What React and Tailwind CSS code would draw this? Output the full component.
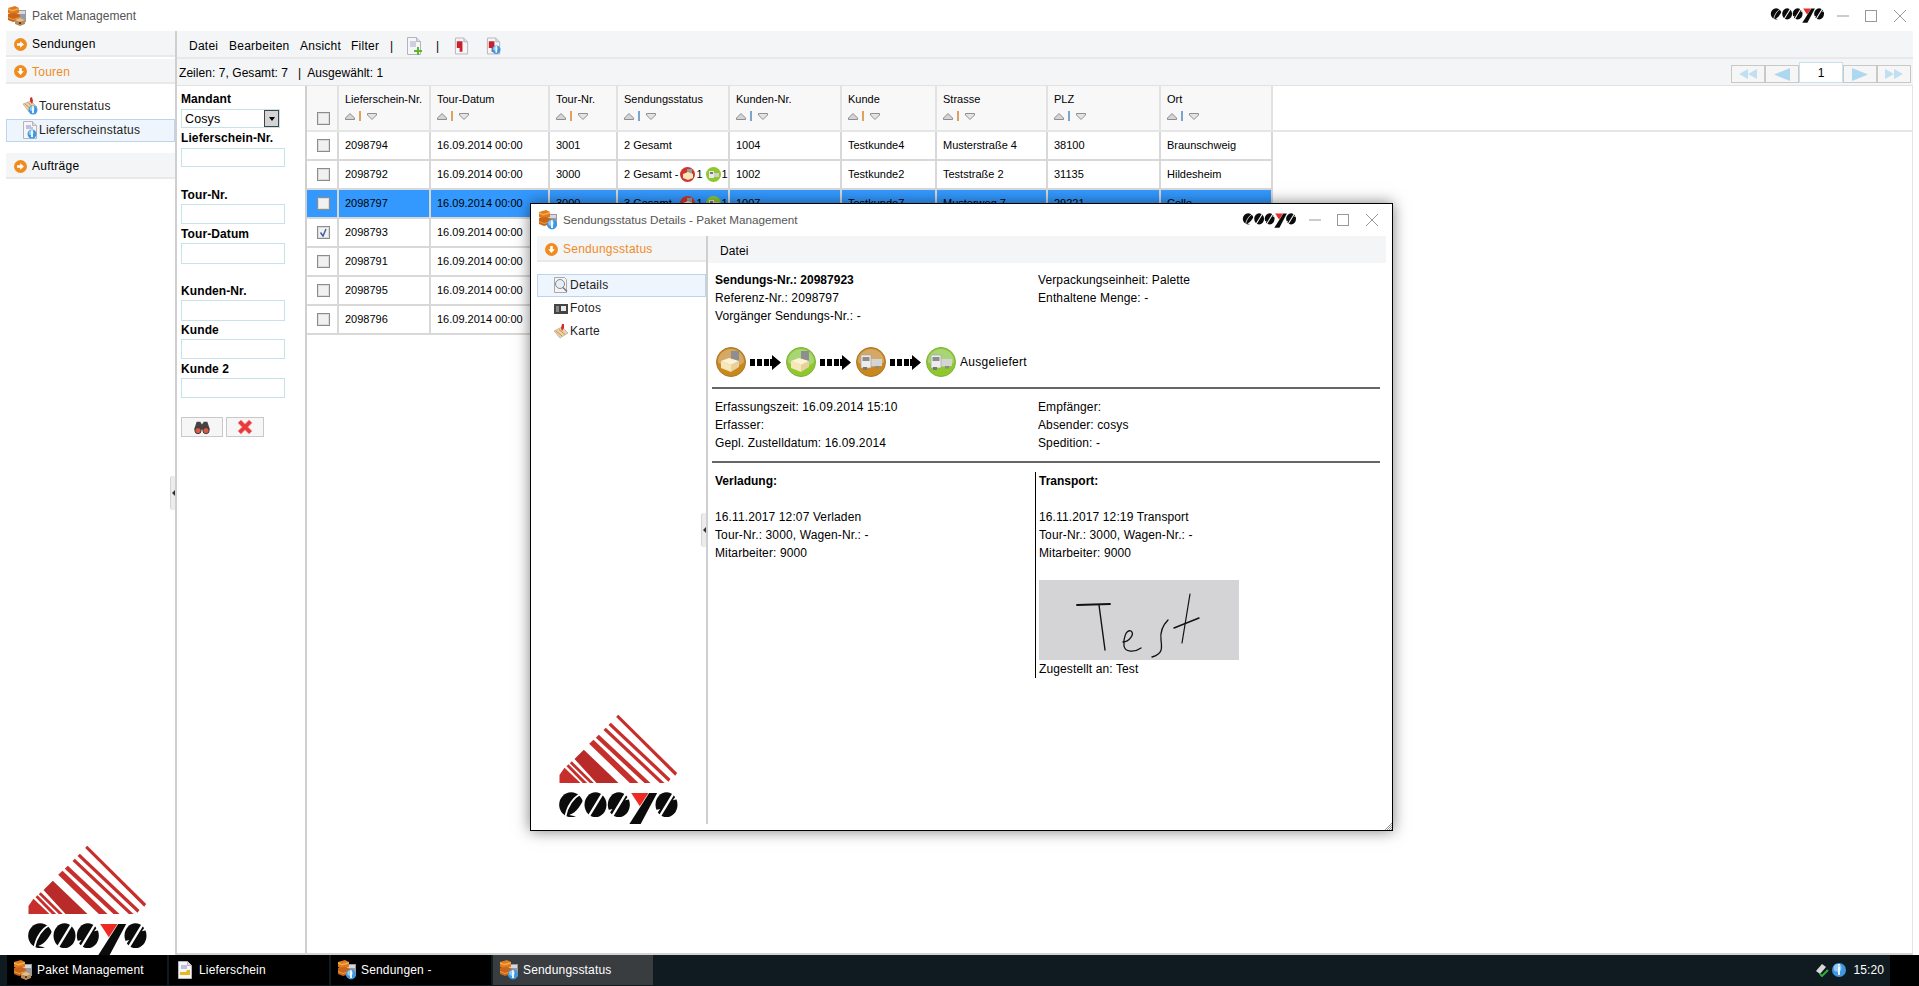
import React from "react";

const columns = [
  { label: "Lieferschein-Nr.", w: "w-[92px]", bar: "bg-[#e0a060]" },
  { label: "Tour-Datum", w: "w-[119px]", bar: "bg-[#e0a060]" },
  { label: "Tour-Nr.", w: "w-[68px]", bar: "bg-[#e0a060]" },
  { label: "Sendungsstatus", w: "w-[112px]", bar: "bg-[#7aa5cc]" },
  { label: "Kunden-Nr.", w: "w-[112px]", bar: "bg-[#7aa5cc]" },
  { label: "Kunde", w: "w-[95px]", bar: "bg-[#e0a060]" },
  { label: "Strasse", w: "w-[111px]", bar: "bg-[#e0a060]" },
  { label: "PLZ", w: "w-[113px]", bar: "bg-[#7aa5cc]" },
  { label: "Ort", w: "w-[112px]", bar: "bg-[#7aa5cc]" },
];

const rows = [
  ["2098794", "16.09.2014 00:00", "3001", "2 Gesamt", "1004", "Testkunde4", "Musterstraße 4", "38100", "Braunschweig"],
  ["2098792", "16.09.2014 00:00", "3000", "2 Gesamt -", "1002", "Testkunde2", "Teststraße 2", "31135", "Hildesheim"],
  ["2098797", "16.09.2014 00:00", "3000", "3 Gesamt -", "1007", "Testkunde7", "Musterweg 7", "29221", "Celle"],
  ["2098793", "16.09.2014 00:00", "", "", "", "", "", "", ""],
  ["2098791", "16.09.2014 00:00", "", "", "", "", "", "", ""],
  ["2098795", "16.09.2014 00:00", "", "", "", "", "", "", ""],
  ["2098796", "16.09.2014 00:00", "", "", "", "", "", "", ""],
];

function CircleArrow({ down }) {
  return (
    <svg viewBox="0 0 13 13" className="w-[13px] h-[13px] shrink-0">
      <circle cx="6.5" cy="6.5" r="6.5" fill="#f08c1e" />
      {down ? (
        <path d="M5.2 3h2.6v3.2h2L6.5 10 3.2 6.2h2z" fill="#fff" />
      ) : (
        <path d="M3 5.2h3.2v-2L10 6.5 6.2 9.8v-2H3z" fill="#fff" />
      )}
    </svg>
  );
}

function InfoDot({ x, y, r }) {
  return (
    <g>
      <circle cx={x} cy={y} r={r} fill="#3f97e0" />
      <circle cx={x - r * 0.2} cy={y - r * 0.3} r={r * 0.55} fill="#8fcaf5" />
      <rect x={x - 0.9} y={y - r * 0.5} width="1.8" height={r * 1.2} fill="#fff" />
      <rect x={x - 0.9} y={y - r * 0.85} width="1.8" height="1.5" fill="#fff" />
    </g>
  );
}

// the orange parcel stack used for all the app windows
function AppIcon({ info, className }) {
  return (
    <svg viewBox="0 0 20 20" className={className}>
      <rect x="9" y="4" width="10" height="12" fill="#9a9aa0" />
      <rect x="10" y="5" width="8" height="3" fill="#d8d8dc" />
      <path d="M1 2l7-2 4 2v5l-7 2-4-2z" fill="#e07a20" />
      <path d="M1 2l4 2 7-2v1.5l-7 2-4-2z" fill="#f4b04a" />
      <path d="M1 8l7-1 5 2v5l-7 2-5-2z" fill="#c9651a" />
      <path d="M1 11l5 2 7-2v1l-7 2-5-2z" fill="#eea040" />
      {info ? (
        <InfoDot x={14} y={14.5} r={5} />
      ) : (
        <g>
          <path d="M8 14l5-2 5 2v4l-5 2-5-2z" fill="#b98a58" />
          <path d="M8 14l5 2 5-2-5-2z" fill="#e0c090" />
          <rect x="12" y="16" width="2" height="2" fill="#5a3a20" />
        </g>
      )}
    </svg>
  );
}

function DocIcon({ className, children }) {
  return (
    <svg viewBox="0 0 16 18" className={className}>
      <path d="M1.5.5h9l4 4v13h-13z" fill="#f6f6f8" stroke="#b4b4bc" />
      <path d="M10.5.5v4h4" fill="#dcdce4" stroke="#b4b4bc" />
      {children}
    </svg>
  );
}

function TourIcon({ className }) {
  return (
    <svg viewBox="0 0 16 18" className={className}>
      <path d="M1 7l8-3 6 6-8 5z" fill="#e8d4b0" stroke="#b09a80" strokeWidth=".6" />
      <path d="M3 7l7 6M6 5.500l6 6" stroke="#d88a3a" strokeWidth="1" />
      <path d="M8 1l2-1 1 4-1 3-2-3z" fill="#d03028" />
      <InfoDot x={11} y={13} r={4.500} />
    </svg>
  );
}

function Cosys({ className }) {
  return (
    <svg viewBox="24 248 356 100" className={className}>
      <CosysLetters />
    </svg>
  );
}

function CosysLetters() {
  return (
    <g>
      <ellipse cx="60" cy="287" rx="36" ry="37" fill="#0b0b0b" />
      <path d="M92 252C66 266 48 290 42 326" stroke="#fff" strokeWidth="5" fill="none" />
      <path d="M102 262C88 290 78 310 54 318l46 10z" fill="#fff" />
      <ellipse cx="133" cy="287" rx="33" ry="37" fill="#0b0b0b" />
      <path d="M154 254L114 320" stroke="#fff" strokeWidth="7" />
      <ellipse cx="203" cy="287" rx="33" ry="37" fill="#0b0b0b" />
      <path d="M224 254L184 320" stroke="#fff" strokeWidth="7" />
      <path d="M238 270l-16 4 10-14zM168 304l16-4-10 14z" fill="#fff" />
      <path d="M240 252h52l-26 40z" fill="#ee2a24" />
      <path d="M294 252h24l-50 94h-34z" fill="#0b0b0b" />
      <ellipse cx="346" cy="287" rx="33" ry="37" fill="#0b0b0b" />
      <path d="M367 254L327 320" stroke="#fff" strokeWidth="7" />
      <path d="M381 270l-16 4 10-14zM311 304l16-4-10 14z" fill="#fff" />
    </g>
  );
}

function BigLogo() {
  const red = "#c62f2c";
  return (
    <svg viewBox="24 18 356 327" className="w-[119px] h-[109px] block">
      <path d="M195 24l6-7 177 175-6 8z" fill={red} />
      <path d="M172 48l7-7 179 169-6 8z" fill={red} />
      <path d="M157 63l7-7 176 166h-14z" fill={red} />
      <path d="M134 86l9-9 155 145h-18z" fill={red} />
      <path d="M114 104l13-12 135 130h-26z" fill={red} />
      <path d="M70 150l28-28 104 100h-66z" fill="#b92b29" />
      <path d="M56 163l6-6 66 65h-12z" fill={red} />
      <path d="M46 172l6-6 56 56H95z" fill={red} />
      <path d="M25 198l15-22 48 46H25z" fill={red} />
      <CosysLetters />
    </svg>
  );
}

function Step({ green, truck }) {
  const base = green ? "#8ec82c" : "#c9871c";
  const top = green ? "#a9d675" : "#d6a868";
  return (
    <svg viewBox="0 0 30 30" className="w-[30px] h-[30px] shrink-0">
      <circle cx="15" cy="15" r="14.500" fill={base} stroke={green ? "#7fb040" : "#a8782c"} />
      <path d="M2 15a13 13 0 0 1 26 0c-4 4-8 5-13 5s-9-1-13-5z" fill={top} />
      {truck ? (
        <g>
          <rect x="15" y="12" width="11" height="7" fill="#d4d4d4" />
          <path d="M5 8h10v13H5z" fill="#ececec" stroke="#9a9a9a" strokeWidth=".6" />
          <rect x="6.500" y="10" width="7" height="4" fill="#8c8c8c" />
          <rect x="7" y="20" width="4" height="3" fill="#777" />
          <rect x="19" y="19" width="4" height="2.500" fill="#8a8a8a" />
        </g>
      ) : (
        <g>
          <rect x="15" y="4" width="8" height="10" fill="#8e8e92" />
          <path d="M5 14l8-3 10 3-8 4z" fill="#fdf3d4" />
          <path d="M5 14l10 4v7L5 21z" fill="#f6e6b8" />
          <path d="M15 18l8-4v6l-8 5z" fill="#e8d29a" />
        </g>
      )}
    </svg>
  );
}

function MiniStatus({ kind }) {
  return (
    <svg viewBox="0 0 15 15" className="w-[15px] h-[15px] shrink-0">
      <circle cx="7.500" cy="7.500" r="7.500" fill={kind === "red" ? "#d0342c" : "#8ec82c"} />
      {kind === "red" ? (
        <g>
          <rect x="7" y="2" width="5" height="5" fill="#9a9a9a" />
          <path d="M3 7l5-2 5 2v4l-5 2-5-2z" fill="#f6e6b8" />
        </g>
      ) : (
        <g>
          <rect x="3" y="4" width="5" height="7" fill="#e8e8e8" />
          <rect x="8" y="6" width="5" height="4" fill="#cfcfcf" />
          <rect x="4" y="5" width="3" height="2" fill="#777" />
        </g>
      )}
    </svg>
  );
}

function Check({ checked }) {
  return (
    <div className="w-[13px] h-[13px] border border-[#8c8c8c] bg-[#f1f1f1] shadow-[inset_0_0_0_1px_#dcdcdc] flex items-center justify-center">
      {checked && (
        <svg viewBox="0 0 11 11" className="w-[11px] h-[11px]">
          <path d="M2.500 5.500L5 9l3-7" stroke="#3f5aa6" strokeWidth="1.400" fill="none" />
        </svg>
      )}
    </div>
  );
}

function SortIcons({ bar }) {
  return (
    <div className="flex items-center h-[10px] mt-[5px]">
      <svg viewBox="0 0 10 7" className="w-[10px] h-[7px]">
        <path d="M5 .5L9.500 5v1.500h-9V5z" fill="#d4d4d4" stroke="#777" strokeWidth=".8" />
      </svg>
      <div className={`w-[2px] h-[10px] ml-[4px] ${bar}`} />
      <svg viewBox="0 0 10 7" className="w-[10px] h-[7px] ml-[6px]">
        <path d="M.5.500h9V2L5 6.500.5 2z" fill="#e4e4e4" stroke="#777" strokeWidth=".8" />
      </svg>
    </div>
  );
}

function AccordionHead({ label, active, down, className }) {
  return (
    <div className={`flex items-center gap-[5px] pl-[8px] pt-[2px] bg-[#f4f5f7] border-b-2 border-[#e9e9ea] text-[12px] tracking-[0.25px] ${active ? "text-[#f08c1e]" : "text-black"} ${className}`}>
      <CircleArrow down={down} />
      {label}
    </div>
  );
}

function TreeItem({ icon, label, selected, className }) {
  return (
    <div className={`flex items-center pl-[15px] gap-[1px] pb-[2px] text-[12px] tracking-[0.25px] text-[#222] ${selected ? "bg-[#eff5fc] border border-[#bcd4ef]" : "border border-transparent"} ${className}`}>
      {icon}
      {label}
    </div>
  );
}

function PageButton({ children }) {
  return (
    <div className="w-[34px] h-[18px] border border-[#c8c8c8] bg-[#f6f6f6] flex items-center justify-center">
      {children}
    </div>
  );
}

function FilterInput({ className }) {
  return <div className={`w-[104px] border border-[#c6e2ea] bg-white ${className}`} />;
}

function Arrows() {
  return (
    <svg viewBox="0 0 31 15" className="w-[31px] h-[15px] ml-[4px] mr-[5px] shrink-0">
      <rect x="0" y="4" width="5" height="7" fill="#000" />
      <rect x="7" y="4" width="5" height="7" fill="#000" />
      <rect x="14" y="4" width="5" height="7" fill="#000" />
      <path d="M20 4h2V0l9 7.500-9 7.500v-4h-2z" fill="#000" />
    </svg>
  );
}

function WindowControls() {
  return (
    <>
      <svg viewBox="0 0 12 12" className="w-[12px] h-[12px] ml-[12px]">
        <path d="M0 6h12" stroke="#999" />
      </svg>
      <svg viewBox="0 0 12 12" className="w-[12px] h-[12px] ml-[16px]">
        <rect x=".5" y=".5" width="11" height="11" fill="none" stroke="#999" />
      </svg>
      <svg viewBox="0 0 12 12" className="w-[12px] h-[12px] ml-[17px]">
        <path d="M0 0l12 12M12 0L0 12" stroke="#999" />
      </svg>
    </>
  );
}

function SplitHandle({ className }) {
  return (
    <div className={`absolute w-[5px] h-[34px] bg-[#ececec] border-l border-[#d4d4d4] rounded-l-[3px] flex items-center justify-center ${className}`}>
      <div className="w-0 h-0 border-y-[3px] border-y-transparent border-r-[3px] border-r-[#333]" />
    </div>
  );
}

function TaskItem({ icon, label, active }) {
  return (
    <div className={`w-[160px] h-[30px] mr-[2px] flex items-center gap-[4px] pl-[6px] text-white text-[12px] tracking-[0.17px] ${active ? "bg-[#3a3d3f]" : "bg-black"}`}>
      {icon}
      {label}
    </div>
  );
}

function DetailsWindow() {
  const lineCls = "h-[18px] leading-[18px]";
  return (
    <div className="absolute left-[530px] top-[203px] w-[863px] h-[628px] bg-white border border-black shadow-[0_0_14px_rgba(0,0,0,0.5)] flex flex-col text-[12px] tracking-[0.12px] text-black">
      <div className="h-[32px] flex items-center pl-[7px] pr-[14px] shrink-0">
        <AppIcon info className="w-[20px] h-[20px]" />
        <span className="ml-[5px] text-[#555] text-[11.7px] tracking-normal">Sendungsstatus Details - Paket Management</span>
        <Cosys className="ml-auto w-[55px] h-[15px]" />
        <WindowControls />
      </div>
      <div className="flex-1 flex px-[6px] pb-[6px] min-h-0">
        <div className="w-[169px] flex flex-col">
          <AccordionHead label="Sendungsstatus" active down className="h-[26px]" />
          <TreeItem
            selected
            className="h-[23px] mt-[12px]"
            label="Details"
            icon={
              <svg viewBox="0 0 16 16" className="w-[16px] h-[16px]">
                <path d="M1.500.5h10l2 2v13h-12z" fill="#f4f4f6" stroke="#aaa" />
                <circle cx="7" cy="7" r="4.500" fill="#e8eef6" stroke="#888" />
                <path d="M10 10.500l4 4" stroke="#777" strokeWidth="1.500" />
              </svg>
            }
          />
          <TreeItem
            className="h-[23px]"
            label="Fotos"
            icon={
              <svg viewBox="0 0 16 16" className="w-[16px] h-[16px]">
                <rect x="1" y="4" width="14" height="10" fill="#444" />
                <rect x="8" y="6" width="5" height="5" fill="#e8e8e8" />
                <rect x="3" y="6" width="3" height="6" fill="#888" />
              </svg>
            }
          />
          <TreeItem
            className="h-[23px]"
            label="Karte"
            icon={
              <svg viewBox="0 0 16 16" className="w-[16px] h-[16px]">
                <path d="M1 8l8-4 6 6-8 5z" fill="#e8d4b0" stroke="#a89a88" strokeWidth=".6" />
                <path d="M3 8l6 5M6 6.500l6 5" stroke="#d88a3a" />
                <path d="M9 1l2 0 0 4-2 3-1-3z" fill="#d03028" />
              </svg>
            }
          />
          <div className="mt-auto pl-[22px]">
            <BigLogo />
          </div>
        </div>
        <div className="w-[2px] bg-[#cfcfcf]" />
        <div className="flex-1 flex flex-col min-w-0">
          <div className="h-[27px] bg-[#f4f5f7] flex items-center pl-[12px] pt-[2px] shrink-0">Datei</div>
          <div className="pl-[4px] pr-[6px]">
            <div className="flex pl-[3px] pt-[8px]">
              <div className="w-[323px]">
                <div className={`${lineCls} font-bold tracking-normal`}>Sendungs-Nr.: 20987923</div>
                <div className={lineCls}>Referenz-Nr.: 2098797</div>
                <div className={lineCls}>Vorgänger Sendungs-Nr.: -</div>
              </div>
              <div>
                <div className={lineCls}>Verpackungseinheit: Palette</div>
                <div className={lineCls}>Enthaltene Menge: -</div>
              </div>
            </div>
            <div className="flex items-center pl-[4px] mt-[22px]">
              <Step />
              <Arrows />
              <Step green />
              <Arrows />
              <Step truck />
              <Arrows />
              <Step green truck />
              <span className="ml-[4px] tracking-[0.3px]">Ausgeliefert</span>
            </div>
            <div className="h-[2px] bg-[#666] mt-[10px]" />
            <div className="flex pl-[3px] mt-[9px]">
              <div className="w-[323px]">
                <div className={lineCls}>Erfassungszeit: 16.09.2014 15:10</div>
                <div className={lineCls}>Erfasser:</div>
                <div className={lineCls}>Gepl. Zustelldatum: 16.09.2014</div>
              </div>
              <div>
                <div className={lineCls}>Empfänger:</div>
                <div className={lineCls}>Absender: cosys</div>
                <div className={lineCls}>Spedition: -</div>
              </div>
            </div>
            <div className="h-[2px] bg-[#666] mt-[9px]" />
            <div className="flex mt-[9px]">
              <div className="w-[323px] pl-[3px]">
                <div className={`${lineCls} font-bold tracking-normal`}>Verladung:</div>
                <div className={`${lineCls} mt-[18px]`}>16.11.2017 12:07 Verladen</div>
                <div className={lineCls}>Tour-Nr.: 3000, Wagen-Nr.: -</div>
                <div className={lineCls}>Mitarbeiter: 9000</div>
              </div>
              <div className="border-l border-black pl-[3px]">
                <div className={`${lineCls} font-bold tracking-normal`}>Transport:</div>
                <div className={`${lineCls} mt-[18px]`}>16.11.2017 12:19 Transport</div>
                <div className={lineCls}>Tour-Nr.: 3000, Wagen-Nr.: -</div>
                <div className={lineCls}>Mitarbeiter: 9000</div>
                <div className="w-[200px] h-[80px] bg-[#d4d4d6] mt-[18px]">
                  <svg viewBox="0 0 200 80" className="w-[200px] h-[80px]">
                    <g fill="none" stroke="#111" strokeLinecap="round">
                      <path d="M38 25l33-1" strokeWidth="1.800" />
                      <path d="M60 25l6 45" strokeWidth="1.400" />
                      <path d="M84 62c6 0 12-8 8-11-5-2-8 8-7 15 1 6 10 7 17 2" strokeWidth="1.300" />
                      <path d="M129 40c-6 6-8 12-7 20 1 8 2 14-9 17" strokeWidth="1.300" />
                      <path d="M151 14l-8 49" strokeWidth="1.200" />
                      <path d="M135 48l25-10" strokeWidth="1.400" />
                    </g>
                  </svg>
                </div>
                <div className={lineCls}>Zugestellt an: Test</div>
              </div>
            </div>
          </div>
        </div>
      </div>
      <SplitHandle className="left-[170px] top-[309px]" />
      <svg viewBox="0 0 7 7" className="absolute right-0 bottom-0 w-[7px] h-[7px]">
        <path d="M7 0L0 7M7 2L2 7M7 4L4 7M7 6L6 7" stroke="#666" strokeWidth=".7" />
      </svg>
    </div>
  );
}

export default function App() {
  return (
    <div className="relative w-[1919px] h-[986px] overflow-hidden bg-white flex flex-col font-['Liberation_Sans',Arial,sans-serif] text-black">
      {/* title bar */}
      <div className="h-[31px] shrink-0 flex items-center pl-[7px] pr-[13px]">
        <AppIcon className="w-[20px] h-[20px]" />
        <span className="ml-[5px] text-[12px] text-[#555]">Paket Management</span>
        <Cosys className="ml-auto w-[55px] h-[15px]" />
        <WindowControls />
      </div>

      <div className="flex-1 flex px-[6px] min-h-0">
        {/* left accordion */}
        <div className="w-[169px] flex flex-col">
          <AccordionHead label="Sendungen" className="h-[26px]" />
          <AccordionHead label="Touren" active down className="h-[25px] mt-[2px]" />
          <TreeItem
            className="h-[23px] mt-[11px]"
            label="Tourenstatus"
            icon={<TourIcon className="w-[16px] h-[18px]" />}
          />
          <TreeItem
            selected
            className="h-[23px] mt-[1px]"
            label="Lieferscheinstatus"
            icon={
              <DocIcon className="w-[16px] h-[18px]">
                <path d="M4 5h5M4 7h7" stroke="#8a8acc" />
                <InfoDot x={10} y={13} r={4.500} />
              </DocIcon>
            }
          />
          <AccordionHead label="Aufträge" className="h-[26px] mt-[11px]" />
          <div className="mt-auto pl-[22px]">
            <BigLogo />
          </div>
        </div>
        <div className="w-[2px] bg-[#cfcfcf] relative">
          <SplitHandle className="right-[2px] top-[445px]" />
        </div>

        <div className="flex-1 flex flex-col min-w-0 border-b-2 border-[#d4d4d4]">
          {/* menu */}
          <div className="h-[28px] shrink-0 bg-[#f4f5f7] border-b-2 border-[#e9e9ea] flex items-center pl-[12px] pt-[3px] text-[12px] tracking-[0.25px]">
            <span className="w-[40px]">Datei</span>
            <span className="w-[71px]">Bearbeiten</span>
            <span className="w-[51px]">Ansicht</span>
            <span className="w-[39px]">Filter</span>
            <span className="w-[16px]">|</span>
            <DocIcon className="w-[16px] h-[18px]">
              <path d="M4 5h6M4 7h6M4 9h6" stroke="#a8a8d0" />
              <path d="M11 10v3h-3v2h3v3h2v-3h3v-2h-3v-3z" fill="#5cb82c" />
            </DocIcon>
            <span className="w-[14px] ml-[14px]">|</span>
            <DocIcon className="w-[15px] h-[18px] ml-[4px]">
              <path d="M3 4h6v11H6v-4H3z" fill="#c8202c" />
            </DocIcon>
            <DocIcon className="w-[15px] h-[18px] ml-[17px]">
              <path d="M3 4h6v11H6v-4H3z" fill="#c8202c" />
              <InfoDot x={11} y={13} r={4.500} />
            </DocIcon>
          </div>

          {/* status row and pager */}
          <div className="h-[27px] shrink-0 bg-[#f4f5f7] flex items-end justify-between pr-[2px] pl-[2px] pb-[2px] border-b border-[#e2e2e2] text-[12px]">
            <div className="self-center pt-[3px] flex tracking-[0.05px]">
              <span>Zeilen: 7, Gesamt: 7</span>
              <span className="ml-[10px]">|</span>
              <span className="ml-[6px]">Ausgewählt: 1</span>
            </div>
            <div className="flex items-end">
              <PageButton>
                <svg viewBox="0 0 18 10" className="w-[18px] h-[10px]">
                  <path d="M9 0v10L0 5zM18 0v10L9 5z" fill="#bfe0f2" />
                </svg>
              </PageButton>
              <PageButton>
                <svg viewBox="0 0 16 13" className="w-[16px] h-[13px]">
                  <path d="M16 0v13L0 6.500z" fill="#aed8f0" />
                </svg>
              </PageButton>
              <div className="w-[44px] h-[21px] border border-[#c6e2ea] bg-white flex items-center justify-center text-[12px]">1</div>
              <PageButton>
                <svg viewBox="0 0 16 13" className="w-[16px] h-[13px]">
                  <path d="M0 0v13l16-6.500z" fill="#aed8f0" />
                </svg>
              </PageButton>
              <PageButton>
                <svg viewBox="0 0 18 10" className="w-[18px] h-[10px]">
                  <path d="M0 0v10l9-5zM9 0v10l9-5z" fill="#bfe0f2" />
                </svg>
              </PageButton>
            </div>
          </div>

          <div className="flex-1 flex min-h-0 border-r border-[#e4e4e4]">
            {/* filter form */}
            <div className="w-[130px] shrink-0 border-r-2 border-[#d0d0d0] pl-[4px] pt-[6px] text-[12px] font-bold tracking-[0.1px]">
              <div className="h-[14px] leading-[14px]">Mandant</div>
              <div className="w-[99px] h-[19px] mt-[3px] border border-[#c6e2ea] flex items-center justify-between font-normal pl-[3px] text-[12.5px]">
                <span className="pt-[2px]">Cosys</span>
                <div className="w-[15px] h-[17px] bg-[#d4d4d4] border border-[#444] flex items-center justify-center">
                  <div className="w-0 h-0 border-x-[3.500px] border-x-transparent border-t-[4px] border-t-black" />
                </div>
              </div>
              <div className="h-[14px] leading-[14px] mt-[3px]">Lieferschein-Nr.</div>
              <FilterInput className="h-[19px] mt-[3px]" />
              <div className="h-[14px] leading-[14px] mt-[21px]">Tour-Nr.</div>
              <FilterInput className="h-[20px] mt-[2px]" />
              <div className="h-[14px] leading-[14px] mt-[3px]">Tour-Datum</div>
              <FilterInput className="h-[21px] mt-[2px]" />
              <div className="h-[14px] leading-[14px] mt-[20px]">Kunden-Nr.</div>
              <FilterInput className="h-[21px] mt-[2px]" />
              <div className="h-[14px] leading-[14px] mt-[2px]">Kunde</div>
              <FilterInput className="h-[20px] mt-[2px]" />
              <div className="h-[14px] leading-[14px] mt-[3px]">Kunde 2</div>
              <FilterInput className="h-[20px] mt-[2px]" />
              <div className="flex mt-[19px] gap-[3px]">
                <div className="w-[42px] h-[20px] border border-[#c8c8c8] bg-[#f6f6f6] flex items-center justify-center">
                  <svg viewBox="0 0 18 15" className="w-[16px] h-[15px]">
                    <path d="M3 1h4l2 3 2-3h4l3 9H0z" fill="#444" />
                    <circle cx="4.500" cy="11" r="3.500" fill="#d85a40" stroke="#333" />
                    <circle cx="13.500" cy="11" r="3.500" fill="#d85a40" stroke="#333" />
                  </svg>
                </div>
                <div className="w-[38px] h-[20px] border border-[#c8c8c8] bg-[#f6f6f6] flex items-center justify-center">
                  <svg viewBox="0 0 16 16" className="w-[16px] h-[16px]">
                    <path d="M2.500 2.500l11 11M13.500 2.500l-11 11" stroke="#f6a0a0" strokeWidth="5" />
                    <path d="M2.500 2.500l11 11M13.500 2.500l-11 11" stroke="#e8383a" strokeWidth="3.500" />
                  </svg>
                </div>
              </div>
            </div>

            {/* grid */}
            <div className="flex-1 min-w-0 text-[11px]">
              <div className="flex h-[46px] border-b-2 border-[#e6e6e6]">
                <div className="w-[32px] shrink-0 bg-[#f8f8f8] border-r-2 border-[#e2e2e2] pl-[10px] pt-[26px]">
                  <Check />
                </div>
                {columns.map((c) => (
                  <div key={c.label} className={`${c.w} shrink-0 bg-[#f8f8f8] border-r-2 border-[#e2e2e2] pl-[6px] pt-[6px]`}>
                    <div className="leading-[14px]">{c.label}</div>
                    <SortIcons bar={c.bar} />
                  </div>
                ))}
              </div>
              {rows.map((row, r) => (
                <div key={row[0]} className="flex h-[29px]">
                  <div className={`w-[32px] shrink-0 border-r-2 border-b-2 border-[#d8d8d8] pl-[10px] pt-[7px] ${r === 2 ? "bg-[#3399ff]" : ""}`}>
                    <Check checked={r === 3} />
                  </div>
                  {row.map((val, i) => (
                    <div
                      key={i}
                      className={`${columns[i].w} shrink-0 border-r-2 border-b-2 border-[#d8d8d8] pl-[6px] flex items-center whitespace-nowrap ${r === 2 ? "bg-[#3399ff]" : ""}`}
                    >
                      {val}
                      {i === 3 && (r === 1 || r === 2) && (
                        <>
                          <span className="ml-[2px]"><MiniStatus kind="red" /></span>
                          <span className="ml-[1px]">1</span>
                          <span className="ml-[3px]"><MiniStatus kind="green" /></span>
                          <span className="ml-[1px]">1</span>
                        </>
                      )}
                    </div>
                  ))}
                </div>
              ))}
            </div>
          </div>
        </div>
      </div>

      {/* taskbar */}
      <div className="h-[31px] shrink-0 bg-[#0f1b21] flex pl-[7px] pb-[1px]">
        <TaskItem icon={<AppIcon className="w-[20px] h-[20px]" />} label="Paket Management" />
        <TaskItem
          label="Lieferschein"
          icon={
            <DocIcon className="w-[16px] h-[20px] mx-[2px]">
              <path d="M4 5h6M4 7h6" stroke="#8a8acc" />
              <path d="M3 11h6l1-2h3v5H3z" fill="#e8b820" />
            </DocIcon>
          }
        />
        <TaskItem icon={<AppIcon info className="w-[20px] h-[20px]" />} label="Sendungen -" />
        <TaskItem active icon={<AppIcon info className="w-[20px] h-[20px]" />} label="Sendungsstatus" />
        <div className="ml-auto flex items-center text-white text-[12px] pr-[6px]">
          <svg viewBox="0 0 14 14" className="w-[14px] h-[14px]">
            <path d="M1 8l6-7 4 3-6 7z" fill="#d8d8d8" />
            <path d="M5 11l2 2 6-6" stroke="#2fae3a" strokeWidth="2" fill="none" />
          </svg>
          <svg viewBox="0 0 14 14" className="w-[14px] h-[14px] ml-[3px]">
            <InfoDot x={7} y={7} r={7} />
          </svg>
          <span className="ml-[7px] tracking-[0.1px]">15:20</span>
        </div>
        <div className="w-[29px] bg-black -mb-[1px]" />
      </div>

      <DetailsWindow />
    </div>
  );
}
